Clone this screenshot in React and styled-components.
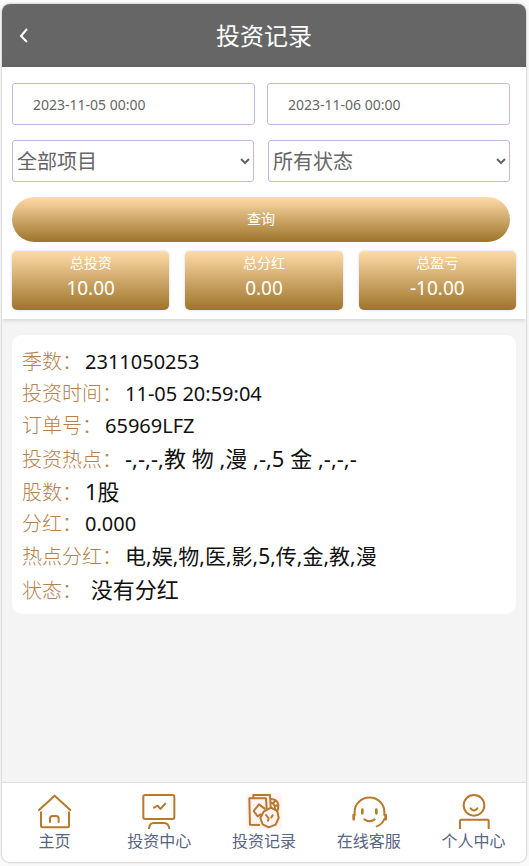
import styled, { createGlobalStyle } from "styled-components";

const gold = "linear-gradient(#ffdba8, #9c742a)";
const iconColor = "#b8792a";

const stats = [
  { label: "总投资", value: "10.00" },
  { label: "总分红", value: "0.00" },
  { label: "总盈亏", value: "-10.00" },
];

const record = [
  { label: "季数", value: "2311050253", size: 20 },
  { label: "投资时间", value: "11-05 20:59:04", size: 20 },
  { label: "订单号", value: "65969LFZ", size: 20 },
  { label: "投资热点", value: "-,-,-,教 物 ,漫 ,-,5 金 ,-,-,-", size: 22 },
  { label: "股数", value: "1股", size: 22 },
  { label: "分红", value: "0.000", size: 20 },
  { label: "热点分红", value: "电,娱,物,医,影,5,传,金,教,漫", size: 21 },
  { label: "状态", value: " 没有分红", size: 22 },
];

const HomeIcon = () => (
  <TabIcon viewBox="0 0 108 108">
    <path d="M9 51 56 8 103 51" />
    <path d="M15 58V99Q15 103 19 103H95Q99 103 99 99V58" />
    <path d="M42 87V77Q42 69 50 69H60Q68 69 68 77V87" />
  </TabIcon>
);

const BoardIcon = () => (
  <TabIcon viewBox="0 0 108 108">
    <rect x="7" y="6" width="93" height="72" rx="5" />
    <path d="M39 44 50 38 58 48 73 32" />
    <path d="M24 106Q26 90 38 90H70Q82 90 85 106" />
  </TabIcon>
);

const RecordIcon = () => (
  <TabIcon viewBox="0 0 108 108">
    <rect width="108" height="108" fill="#fff3f4" stroke="none" />
    <path d="M22 14V6H72L74 42" />
    <path d="M40 96 12 95 10 16H60L62 46" />
    <path d="M56 47 39 34 23 54 35 70 44 64" />
    <path d="M76 18Q95 20 97 36Q98 48 93 54M76 29Q86 31 87 46" />
    <path d="M87 24 81 31M96 37 87 39" />
    <path d="M75 44 94 54 98 75 89 95 68 103 50 94 43 75 53 56Z" />
    <path d="M60 66 68 76 66 83M80 67 76 73" />
  </TabIcon>
);

const ServiceIcon = () => (
  <TabIcon viewBox="0 0 108 108">
    <path d="M11 66V56A44 42 0 0 1 100 56V66" />
    <path d="M8 66V79M104 66V79" strokeWidth="8" />
    <path d="M100 78Q94 94 77 100" />
    <path d="M34 50V61M76 50V61" strokeWidth="8" />
    <path d="M40 79Q55 91 71 79" />
  </TabIcon>
);

const UserIcon = () => (
  <TabIcon viewBox="0 0 108 108">
    <circle cx="54" cy="37" r="31" />
    <path d="M44 46Q54 59 64 46" />
    <path d="M12 106V83Q12 80 15 80H95Q98 80 98 83V106" />
  </TabIcon>
);

const tabs = [
  { label: "主页", Icon: HomeIcon },
  { label: "投资中心", Icon: BoardIcon },
  { label: "投资记录", Icon: RecordIcon },
  { label: "在线客服", Icon: ServiceIcon },
  { label: "个人中心", Icon: UserIcon },
];

export default function App() {
  return (
    <>
      <GlobalStyle />
      <Page>
        <Header>
          <BackButton type="button" aria-label="返回">
            <svg width="10" height="16" viewBox="0 0 10 16">
              <path d="M8 1 2 8l6 6" fill="none" stroke="#fff" strokeWidth="2" />
            </svg>
          </BackButton>
          <Title>投资记录</Title>
        </Header>
        <Top>
          <Form onSubmit={(e) => e.preventDefault()}>
            <FieldRow $gap={12}>
              <DateInput aria-label="开始时间" defaultValue="2023-11-05 00:00" />
              <DateInput aria-label="结束时间" defaultValue="2023-11-06 00:00" />
            </FieldRow>
            <FieldRow $gap={14}>
              <Select aria-label="项目">
                <option>全部项目</option>
              </Select>
              <Select aria-label="状态">
                <option>所有状态</option>
              </Select>
            </FieldRow>
            <SearchButton type="submit">查询</SearchButton>
          </Form>
          <Stats>
            {stats.map((stat) => (
              <Stat key={stat.label}>
                <StatLabel>{stat.label}</StatLabel>
                <StatValue>{stat.value}</StatValue>
              </Stat>
            ))}
          </Stats>
        </Top>
        <Content>
          <RecordCard>
            {record.map((row) => (
              <RecordRow key={row.label} $size={row.size}>
                <RecordLabel>{row.label}：</RecordLabel>
                <RecordValue $size={row.size}>{row.value}</RecordValue>
              </RecordRow>
            ))}
          </RecordCard>
        </Content>
        <TabBar>
          {tabs.map(({ label, Icon }) => (
            <Tab key={label} href="#">
              <Icon />
              {label}
            </Tab>
          ))}
        </TabBar>
      </Page>
    </>
  );
}

const GlobalStyle = createGlobalStyle`
  * {
    box-sizing: border-box;
  }
  body {
    margin: 0;
    background: #fafafa;
    font-family: "Noto Sans", "Noto Sans CJK SC", sans-serif;
  }
  button, input, select {
    font-family: inherit;
  }
`;
const Page = styled.div`
  display: flex;
  flex-direction: column;
  min-height: calc(100vh - 8px);
  margin: 4px 3px 4px 2px;
  border-radius: 8px;
  overflow: hidden;
  background: #f4f4f4;
  box-shadow: 0 0 3px rgba(0, 0, 0, 0.3);
`;
const Header = styled.header`
  display: grid;
  grid-template-columns: 44px 1fr 44px;
  align-items: center;
  height: 63px;
  background: #666;
  color: #fff;
`;
const BackButton = styled.button`
  display: flex;
  justify-content: center;
  padding: 8px;
  border: 0;
  background: none;
  cursor: pointer;
`;
const Title = styled.h1`
  margin: 0;
  font-size: 24px;
  font-weight: 400;
  line-height: 32px;
  text-align: center;
`;
const Top = styled.section`
  padding: 16px 10px 9px;
  background: #fff;
  box-shadow: 0 1px 5px rgba(0, 0, 0, 0.15);
`;
const Form = styled.form`
  padding-right: 6px;
`;
const FieldRow = styled.div`
  display: grid;
  grid-template-columns: 1fr 1fr;
  gap: ${(props) => props.$gap}px;
  margin-bottom: 15px;
`;
const DateInput = styled.input`
  width: 100%;
  min-width: 0;
  height: 42px;
  padding: 0 20px;
  border: 1px solid #cbb4e0;
  border-radius: 3px;
  background: #fff;
  color: #666;
  font-size: 14px;
  outline: none;
`;
const Select = styled.select`
  width: 100%;
  min-width: 0;
  height: 42px;
  border: 1px solid #cbb4e0;
  border-radius: 3px;
  background: #fff;
  color: #666;
  font-size: 20px;
  outline: none;
`;
const SearchButton = styled.button`
  display: block;
  width: 100%;
  height: 45px;
  padding: 0 0 4px;
  border: 0;
  border-radius: 23px;
  background: ${gold};
  color: #fff;
  font-size: 14px;
  cursor: pointer;
`;
const Stats = styled.div`
  display: grid;
  grid-template-columns: repeat(3, 1fr);
  gap: 16px;
  margin-top: 9px;
`;
const Stat = styled.div`
  height: 59px;
  border-radius: 5px;
  background: ${gold};
  box-shadow: 0 0 3px rgba(90, 100, 200, 0.3);
  color: #fff;
  text-align: center;
`;
const StatLabel = styled.div`
  font-size: 14px;
  line-height: 23px;
`;
const StatValue = styled.div`
  font-size: 19px;
  line-height: 29px;
`;
const Content = styled.main`
  flex: 1;
  padding: 16px 10px;
`;
const RecordCard = styled.article`
  padding: 11px 10px 8px;
  border-radius: 10px;
  background: #fff;
`;
const RecordRow = styled.div`
  display: flex;
  align-items: baseline;
  gap: 3px;
  height: ${(props) => (props.$size > 20 ? 33 : 32)}px;
  line-height: 32px;
  white-space: pre;
`;
const RecordLabel = styled.span`
  color: #b5804c;
  font-size: 20px;
  font-weight: 300;
`;
const RecordValue = styled.span`
  color: #111;
  font-size: ${(props) => props.$size}px;
`;
const TabBar = styled.nav`
  display: grid;
  grid-template-columns: repeat(5, 1fr);
  height: 80px;
  padding-top: 10px;
  border-top: 1px solid #ddd;
  background: #fff;
`;
const Tab = styled.a`
  display: flex;
  flex-direction: column;
  align-items: center;
  color: #576482;
  font-size: 16px;
  line-height: 24px;
  text-decoration: none;
`;
const TabIcon = styled.svg`
  width: 36px;
  height: 36px;
  fill: none;
  stroke: ${iconColor};
  stroke-width: 6;
  stroke-linecap: round;
  stroke-linejoin: round;
`;
